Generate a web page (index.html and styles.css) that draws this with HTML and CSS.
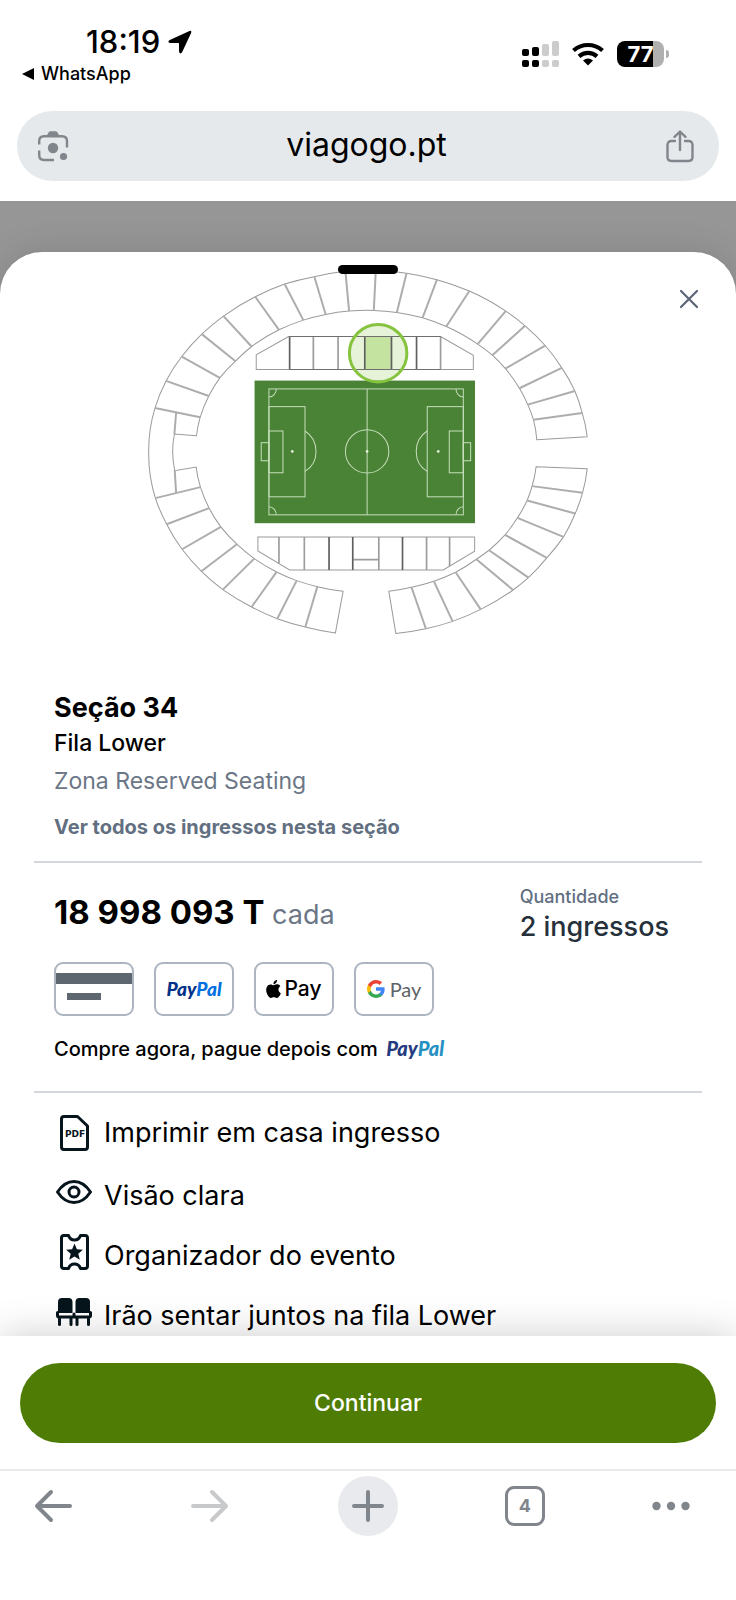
FILE: index.html
```html
<!DOCTYPE html>
<html lang="pt">
<head>
<meta charset="utf-8">
<meta name="viewport" content="width=device-width, initial-scale=1">
<title>viagogo.pt</title>
<link rel="stylesheet" href="styles.css">
</head>
<body>
<div class="screen">
  <header class="status">
    <div class="status-left">
      <div class="clock">18:19
        <svg width="24" height="24" viewBox="0 0 24 24" aria-hidden="true"><path d="M21.500 1 1.800 10Q0 11 .5 12.200 1 13 2.500 13H10.500Q11 13 11 13.500V21Q11 23 12.200 23.400 13.500 23.500 14.200 22L23.200 2.800Q24 .300 21.500 1Z"/></svg>
      </div>
      <a class="return" href="#"><svg width="12" height="12" viewBox="0 0 12 12" aria-hidden="true"><path d="M0 6 12 0V12Z"/></svg>WhatsApp</a>
    </div>
    <div class="status-right">
      <svg width="37" height="26" viewBox="0 0 37 26" role="img" aria-label="Sinal">
        <rect x="0" y="8" width="7" height="7" rx="2"/><rect x="10" y="6" width="7" height="9" rx="2"/>
        <rect x="0" y="19" width="7" height="7" rx="2"/><rect x="10" y="19" width="7" height="7" rx="2"/>
        <g fill="#ccc"><rect x="20" y="3" width="7" height="12" rx="2"/><rect x="30" y="0" width="7" height="15" rx="2"/><rect x="20" y="19" width="7" height="7" rx="2"/><rect x="30" y="19" width="7" height="7" rx="2"/></g>
      </svg>
      <svg width="32" height="24" viewBox="0 0 32 24" role="img" aria-label="Wi-Fi"><g fill="none" stroke="#000" stroke-width="4.200"><path d="M1.500 8.500Q8 3 16 3T30.500 8.500"/><path d="M7 14.300Q11 10.900 16 10.900T25 14.300"/></g><path d="M11 18.500Q16 14.500 21 18.500L16 23.500Z"/></svg>
      <div class="battery"><span>77</span></div>
    </div>
  </header>

  <div class="address">
    <button class="plain" aria-label="Pesquisar com a câmara">
      <svg width="32" height="32" viewBox="0 0 32 32" fill="none" stroke="#80868b" stroke-width="2.400"><path d="M2.200 14.500V11Q2.200 6.200 7 6.200H25Q30 6.200 30 11V17.500M2.200 20.500V25Q2.200 30 7 30H17"/><path fill="#80868b" stroke="none" d="M9.500 6 11.500 2.500Q12.200 1.200 13.500 1.200H18.500Q19.800 1.200 20.500 2.500L22.500 6Z"/><circle cx="16" cy="18" r="5.200" fill="#80868b" stroke="none"/><circle cx="26.500" cy="26.500" r="3.600" fill="#80868b" stroke="none"/></svg>
    </button>
    <input class="url" type="text" value="viagogo.pt" aria-label="Endereço">
    <button class="plain" aria-label="Partilhar">
      <svg width="32" height="34" viewBox="0 0 32 34" fill="none" stroke="#80868b" stroke-width="2.400" stroke-linecap="round" stroke-linejoin="round"><path d="M11 12H7.500Q3.500 12 3.500 16V28Q3.500 32 7.500 32H24.500Q28.500 32 28.500 28V16Q28.500 12 24.500 12H21M16 21V3M10.500 7.800 16 2.500 21.500 7.800"/></svg>
    </button>
  </div>

  <main class="backdrop">
    <section class="sheet">
      <span class="handle"></span>
      <button class="plain close" aria-label="Fechar"><svg width="20" height="20" viewBox="0 0 20 20" stroke="#5c6577" stroke-width="2.200" stroke-linecap="round"><path d="M2 2 18 18M18 2 2 18"/></svg></button>

      <svg class="map" viewBox="-4 0 1380 1170" role="img" aria-label="Mapa do estádio">
        <g fill="none" stroke="#9a9a9a" stroke-width="3">
          <path d="M171 541A524 416 0 0 1 182 486 524 416 0 0 1 208 422 524 416 0 0 1 241 368 524 416 0 0 1 288 318 524 416 0 0 1 336 274 524 416 0 0 1 418 224 524 416 0 0 1 491 195 524 416 0 0 1 558 178 524 416 0 0 1 628 168 524 416 0 0 1 702 166 524 416 0 0 1 771 172 524 416 0 0 1 848 188 524 416 0 0 1 919 214 524 416 0 0 1 1013 267 524 416 0 0 1 1057 300 524 416 0 0 1 1096 340 524 416 0 0 1 1138 399 524 416 0 0 1 1163 448 524 416 0 0 1 1180 493 524 416 0 0 1 1190 553L1341 544A661 536 0 0 0 1326 473 661 536 0 0 0 1304 407 661 536 0 0 0 1265 338 661 536 0 0 0 1215 271 661 536 0 0 0 1155 212 661 536 0 0 0 1097 168 661 536 0 0 0 988 108 661 536 0 0 0 891 74 661 536 0 0 0 800 55 661 536 0 0 0 708 46 661 536 0 0 0 617 49 661 536 0 0 0 524 65 661 536 0 0 0 435 87 661 536 0 0 0 347 125 661 536 0 0 0 252 183 661 536 0 0 0 187 237 661 536 0 0 0 127 304 661 536 0 0 0 80 377 661 536 0 0 0 47 458 661 536 0 0 0 28 595 661 536 0 0 0 48 728 661 536 0 0 0 82 806 661 536 0 0 0 128 881 661 536 0 0 0 186 947 661 536 0 0 0 250 1002 661 536 0 0 0 336 1054 661 536 0 0 0 413 1089 661 536 0 0 0 497 1114 661 536 0 0 0 587 1132L610 1007A524 416 0 0 1 533 993 524 416 0 0 1 471 975 524 416 0 0 1 411 949 524 416 0 0 1 344 909 524 416 0 0 1 292 866 524 416 0 0 1 244 814 524 416 0 0 1 209 758 524 416 0 0 1 183 695 524 416 0 0 1 170 635L106 646Q94 591 105 536Z"/>
          <path d="M1188 634 1341 640A661 536 0 0 1 1327 712 661 536 0 0 1 1305 774 661 536 0 0 1 1270 844 661 536 0 0 1 1220 907 661 536 0 0 1 1165 966 661 536 0 0 1 1119 1003 661 536 0 0 1 1022 1061 661 536 0 0 1 938 1097 661 536 0 0 1 858 1119 661 536 0 0 1 768 1133L747 1007A524 416 0 0 0 815 995 524 416 0 0 0 882 977 524 416 0 0 0 947 950 524 416 0 0 0 1009 911 524 416 0 0 0 1047 884 524 416 0 0 0 1095 838 524 416 0 0 0 1132 787 524 416 0 0 0 1161 735 524 416 0 0 0 1176 692 524 416 0 0 0 1188 634Z"/>
          <path d="M350 343V299L447 244H902L1000 300V343ZM355 844H1004V887L910 943H450L355 886Z"/>
        </g>
        <path fill="none" stroke="#adadad" stroke-width="6" d="M617 49 628 168M524 65 558 178M435 87 491 195M347 125 418 224M252 183 336 274M187 237 288 318M127 304 241 368M80 377 208 422M47 458 182 486M110 473 105 536M708 46 702 166M800 55 771 172M891 74 848 188M988 108 919 214M1097 168 1013 267M1155 212 1057 300M1215 271 1096 340M1265 338 1138 399M1304 407 1163 448M1326 473 1180 493M48 728 183 695M106 646 110 712M82 806 209 758M128 881 244 814M186 947 292 866M250 1002 344 909M336 1054 411 949M413 1089 471 975M497 1114 533 993M1176 692 1327 712M1161 735 1305 774M1132 787 1270 844M1095 838 1220 907M1047 884 1165 966M1009 911 1119 1003M947 950 1022 1061M882 977 938 1097M815 995 858 1119"/>
        <path fill="none" stroke="#9c9c9c" stroke-width="5" d="M521 244V343M595 244V343M902 244V343M418 844V924M494 844V943M717 844V943M860 844V943M929 844V931M641 912H717"/>
        <rect x="345" y="376" width="660" height="427" fill="#4b8336"/>
        <g fill="none" stroke="#c5dfbb" stroke-width="3">
          <rect x="388" y="401" width="582" height="377"/><path d="M682 401V778"/><circle cx="682" cy="588" r="65"/>
          <rect x="388" y="454" width="108" height="270"/><rect x="388" y="527" width="42" height="125"/><rect x="365" y="562" width="23" height="54"/>
          <rect x="862" y="454" width="108" height="270"/><rect x="928" y="527" width="42" height="125"/><rect x="970" y="562" width="22" height="54"/>
          <path d="M496 527Q529 548 529 588T496 648M862 527Q829 548 829 588T862 648M410 401A22 24 0 0 1 388 425M948 401A22 24 0 0 0 970 425M388 754A22 24 0 0 1 410 778M970 754A22 24 0 0 0 948 778"/>
        </g>
        <g fill="#e4f2de"><circle cx="458" cy="588" r="4"/><circle cx="682" cy="588" r="4"/><circle cx="895" cy="588" r="4"/></g>
        <circle cx="715" cy="294" r="86" fill="#86c440" fill-opacity=".2"/>
        <rect x="676" y="244" width="79" height="99" fill="#c5e3a0"/>
        <path fill="none" stroke="#5f5f5f" stroke-width="5" d="M450 244V343M675 244V343M755 244V343M830 244V343M568 844V943M639 844V943M788 844V943"/>
        <path fill="none" stroke="#6f6f6f" stroke-width="3" d="M450 244H902M450 343H902"/>
        <circle cx="715" cy="294" r="86" fill="none" stroke="#86c33f" stroke-width="9"/>
      </svg>

      <div class="section-info">
        <h1>Seção 34</h1>
        <p class="row-name">Fila Lower</p>
        <p class="zone">Zona Reserved Seating</p>
        <a class="see-all" href="#">Ver todos os ingressos nesta seção</a>
      </div>

      <div class="purchase">
        <div class="pricing">
          <p class="price"><strong>18 998 093 T</strong> <span>cada</span></p>
          <dl class="quantity"><dt>Quantidade</dt><dd>2 ingressos</dd></dl>
        </div>
        <ul class="methods">
          <li class="method card" aria-label="Cartão"></li>
          <li class="method"><span class="paypal"><span>Pay</span><span>Pal</span></span></li>
          <li class="method"><span class="apple"><svg width="15" height="18" viewBox="2 0 20 24" aria-hidden="true"><path d="M12.152 6.896c-.948 0-2.415-1.078-3.960-1.040-2.040.027-3.910 1.183-4.961 3.014-2.117 3.675-.546 9.103 1.519 12.090 1.013 1.454 2.208 3.090 3.792 3.039 1.520-.065 2.090-.987 3.935-.987 1.831 0 2.350.987 3.960.948 1.637-.026 2.676-1.480 3.676-2.948 1.156-1.688 1.636-3.325 1.662-3.415-.039-.013-3.182-1.221-3.220-4.857-.026-3.040 2.480-4.494 2.597-4.559-1.429-2.090-3.623-2.324-4.390-2.376-2-.156-3.675 1.090-4.610 1.090zM15.530 3.830c.843-1.012 1.400-2.427 1.245-3.830-1.207.052-2.662.805-3.532 1.818-.780.896-1.454 2.338-1.273 3.714 1.338.104 2.715-.688 3.559-1.701"/></svg>Pay</span></li>
          <li class="method"><span class="google"><svg width="18" height="18" viewBox="1 1 22 22" aria-hidden="true"><path fill="#4285f4" d="M22.560 12.250c0-.780-.070-1.530-.200-2.250H12v4.260h5.920c-.260 1.370-1.040 2.530-2.210 3.310v2.770h3.570c2.080-1.920 3.280-4.740 3.280-8.090z"/><path fill="#34a853" d="M12 23c2.970 0 5.460-.980 7.280-2.660l-3.570-2.770c-.980.660-2.230 1.060-3.710 1.060-2.860 0-5.290-1.930-6.160-4.530H2.180v2.840C3.990 20.530 7.700 23 12 23z"/><path fill="#fbbc05" d="M5.840 14.090c-.220-.660-.350-1.360-.350-2.090s.130-1.430.350-2.090V7.070H2.180C1.430 8.550 1 10.220 1 12s.430 3.450 1.180 4.930l2.850-2.220.810-.620z"/><path fill="#ea4335" d="M12 5.380c1.620 0 3.060.560 4.210 1.640l3.150-3.150C17.450 2.090 14.970 1 12 1 7.700 1 3.990 3.470 2.180 7.070l3.660 2.840c.870-2.600 3.300-4.530 6.160-4.530z"/></svg>Pay</span></li>
        </ul>
        <p class="later">Compre agora, pague depois com <span class="paypal soft"><span>Pay</span><span>Pal</span></span></p>
      </div>

      <ul class="features">
        <li><svg width="40" height="40" viewBox="0 0 40 40" aria-hidden="true"><path fill="none" stroke="#06141c" stroke-width="3" stroke-linejoin="round" d="M10 3.500H23.500L33.500 13V34Q33.500 36.500 31 36.500H10Q7.500 36.500 7.500 34V6Q7.500 3.500 10 3.500Z"/><text class="pdf" x="21" y="24" text-anchor="middle">PDF</text></svg>Imprimir em casa ingresso</li>
        <li><svg width="40" height="40" viewBox="0 0 40 40" fill="none" stroke="#06141c" stroke-width="3" stroke-linejoin="round" aria-hidden="true"><path d="M3.500 20Q10.500 9.500 20 9.500T36.500 20Q29.500 30.500 20 30.500T3.500 20Z"/><circle cx="20" cy="20" r="5"/></svg>Visão clara</li>
        <li><svg width="40" height="40" viewBox="0 0 40 40" aria-hidden="true"><path fill="none" stroke="#06141c" stroke-width="3" stroke-linejoin="round" d="M10 3.500H14.500Q16 8 20.500 8T26.500 3.500H31Q33.500 3.500 33.500 6V34Q33.500 36.500 31 36.500H26.500Q25 32 20.500 32T14.500 36.500H10Q7.500 36.500 7.500 34V6Q7.500 3.500 10 3.500Z"/><path fill="#06141c" d="M20.500 11.500 22.900 17.200 28.900 17.700 24.300 21.700 25.800 27.700 20.500 24.500 15.200 27.700 16.700 21.700 12.100 17.700 18.100 17.200Z"/></svg>Organizador do evento</li>
        <li><svg width="40" height="40" viewBox="0 0 40 40" fill="#06141c" aria-hidden="true"><path d="M4 21V10Q4 6 8 6H14.500Q18.500 6 18.500 10V21ZM21.500 21V10Q21.500 6 25.500 6H32Q36 6 36 10V21Z"/><path fill="none" stroke="#06141c" stroke-width="3" stroke-linecap="round" d="M3.500 20.500V23.500Q3.500 25 5 25H35Q36.500 25 36.500 23.500V20.500M20 22V25M5.500 26V32.500M17 26V32.500M23 26V32.500M34.500 26V32.500"/></svg>Irão sentar juntos na fila Lower</li>
      </ul>
    </section>
  </main>

  <div class="action"><button class="continue">Continuar</button></div>

  <nav class="toolbar" aria-label="Navegador">
    <button class="plain" aria-label="Voltar"><svg width="38" height="34" viewBox="0 0 38 34" fill="none" stroke="#80868b" stroke-width="4" stroke-linecap="round" stroke-linejoin="round"><path d="M17 3 3 17 17 31M3 17H36"/></svg></button>
    <button class="plain" aria-label="Avançar" disabled><svg width="38" height="34" viewBox="0 0 38 34" fill="none" stroke="#c8c9ca" stroke-width="4" stroke-linecap="round" stroke-linejoin="round"><path d="M21 3 35 17 21 31M35 17H2"/></svg></button>
    <button class="plain new-tab" aria-label="Novo separador"><svg width="32" height="32" viewBox="0 0 32 32" stroke="#80868b" stroke-width="4" stroke-linecap="round"><path d="M16 2V30M2 16H30"/></svg></button>
    <button class="plain" aria-label="4 separadores"><span class="tabs">4</span></button>
    <button class="plain more" aria-label="Mais"><svg width="38" height="10" viewBox="0 0 38 10" fill="#80868b"><circle cx="4.500" cy="5" r="4.200"/><circle cx="19" cy="5" r="4.200"/><circle cx="33.500" cy="5" r="4.200"/></svg></button>
  </nav>
</div>
</body>
</html>
```
FILE: styles.css
```css
* { box-sizing: border-box; }

body {
  margin: 0;
  background: #fff;
  color: #000;
  font-family: Inter, "Liberation Sans", sans-serif;
}

h1, p, ul, dl, dd { margin: 0; padding: 0; }
ul { list-style: none; }
svg { display: block; flex: none; }

.screen {
  display: flex;
  flex-direction: column;
  min-height: 100vh;
}

.plain {
  display: flex;
  align-items: center;
  justify-content: center;
  padding: 0;
  border: 0;
  background: none;
  font-family: inherit;
}

/* Status bar */
.status {
  display: flex;
  justify-content: space-between;
  align-items: flex-start;
  padding: 24px 72px 23px 22px;
}
.clock {
  display: flex;
  align-items: center;
  gap: 8px;
  padding-left: 64px;
  font-size: 31px;
  font-weight: 500;
  line-height: 36px;
}
.return {
  display: flex;
  align-items: center;
  gap: 7px;
  color: #000;
  font-size: 18px;
  font-weight: 500;
  line-height: 28px;
  text-decoration: none;
}
.status-right {
  display: flex;
  align-items: center;
  gap: 13px;
  padding-top: 17px;
}
.battery {
  position: relative;
  width: 47px;
  border-radius: 8px;
  background: linear-gradient(90deg, #000 77%, #b0b0b0 77%);
  color: #fff;
  font-size: 22px;
  font-weight: 700;
  line-height: 26px;
  text-align: center;
}
.battery::after {
  content: "";
  position: absolute;
  top: 9px;
  right: -5px;
  width: 3px;
  height: 8px;
  border-radius: 0 3px 3px 0;
  background: #b0b0b0;
}

/* Address bar */
.address {
  display: flex;
  align-items: center;
  gap: 12px;
  margin: 0 17px 20px;
  padding: 0 23px 0 20px;
  height: 70px;
  border-radius: 35px;
  background: #e5e9ec;
}
.url {
  flex: 1;
  min-width: 0;
  padding: 0 0 3px;
  border: 0;
  background: none;
  color: #000;
  font: 400 32px/40px Inter, "Liberation Sans", sans-serif;
  text-align: center;
}

/* Ticket sheet */
.backdrop {
  flex: 1;
  padding-top: 51px;
  background: #969696;
}
.sheet {
  position: relative;
  padding: 3px 34px 0;
  border-radius: 42px 42px 0 0;
  background: #fff;
  box-shadow: 0 0 36px rgba(0, 0, 0, .12);
}
.handle {
  position: absolute;
  top: 13px;
  left: calc(50% - 30px);
  width: 60px;
  height: 9px;
  border-radius: 5px;
  background: #000;
}
.close {
  position: absolute;
  top: 32px;
  right: 32px;
  width: 30px;
  height: 30px;
}
.map {
  width: 69%;
  margin: 0 auto;
}

.section-info {
  padding: 44px 20px 18px;
  border-bottom: 2px solid #d3d6da;
}
h1 {
  font-size: 27px;
  font-weight: 700;
  line-height: 36px;
}
.row-name {
  font-size: 23px;
  font-weight: 500;
  line-height: 34px;
}
.zone {
  color: #6b7686;
  font-size: 23px;
  line-height: 42px;
}
.see-all {
  display: block;
  padding-top: 9px;
  color: #626f81;
  font-size: 20px;
  font-weight: 700;
  line-height: 32px;
  text-decoration: none;
}

.purchase {
  padding: 22px 20px 26px;
  border-bottom: 2px solid #d3d6da;
}
.pricing {
  display: flex;
  justify-content: space-between;
  padding-right: 13px;
}
.price {
  padding-top: 6px;
  color: #6b7686;
  font-size: 27px;
  line-height: 42px;
}
.price strong {
  color: #000;
  font-size: 33px;
}
.quantity dt {
  color: #626f81;
  font-size: 18px;
  font-weight: 500;
  line-height: 24px;
}
.quantity dd {
  color: #26303a;
  font-size: 27px;
  font-weight: 500;
  line-height: 36px;
}
.methods {
  display: flex;
  gap: 20px;
  padding: 17px 0;
}
.method {
  display: flex;
  align-items: center;
  justify-content: center;
  width: 80px;
  height: 54px;
  border: 2px solid #adb6c0;
  border-radius: 9px;
}
.card {
  flex-direction: column;
  align-items: flex-start;
  justify-content: flex-start;
}
.card::before {
  content: "";
  width: 100%;
  height: 11px;
  margin-top: 9px;
  background: #5e6770;
}
.card::after {
  content: "";
  width: 34px;
  height: 7px;
  margin: 9px 0 0 11px;
  background: #5e6770;
}
.paypal {
  color: #003087;
  font: italic 900 19px/24px Lato, sans-serif;
}
.paypal span + span { color: #0070e0; }
.soft {
  padding-left: 3px;
  color: #253b80;
  font-size: 20px;
}
.soft span + span { color: #2790c3; }
.apple, .google {
  display: flex;
  align-items: center;
  gap: 3px;
  font-size: 21px;
  font-weight: 500;
  line-height: 26px;
}
.google {
  gap: 5px;
  color: #5f6368;
  font: 400 20px/26px Lato, sans-serif;
}
.later {
  font-size: 20px;
  font-weight: 500;
  line-height: 32px;
}

.features {
  margin-bottom: -12px;
  padding: 10px 20px 0;
  font-size: 27px;
  line-height: 60px;
}
.features li {
  display: flex;
  align-items: center;
  gap: 10px;
}
.features li:first-child { padding-bottom: 3px; }
.features li + li svg { margin-bottom: 8px; }
.pdf {
  fill: #06141c;
  font: 700 9px "DejaVu Sans", sans-serif;
}

/* Purchase action, over the end of the sheet */
.action {
  position: relative;
  padding: 27px 20px 26px;
  background: #fff;
  box-shadow: 0 0 38px rgba(0, 0, 0, .2);
}
.continue {
  width: 100%;
  height: 80px;
  border: 0;
  border-radius: 40px;
  background: #4e7c04;
  color: #fff;
  font: 500 23px/30px Inter, "Liberation Sans", sans-serif;
}

/* Browser toolbar */
.toolbar {
  position: relative;
  display: flex;
  align-items: center;
  justify-content: space-between;
  padding: 5px 24px 64px 23px;
  border-top: 2px solid #e9eaeb;
  background: #fff;
}
.toolbar .plain {
  width: 60px;
  height: 60px;
}
.toolbar .new-tab {
  border-radius: 50%;
  background: #e8eaed;
}
.toolbar .more { justify-content: flex-start; }
.tabs {
  width: 40px;
  height: 40px;
  border: 3px solid #80868b;
  border-radius: 9px;
  color: #80868b;
  font-size: 18px;
  font-weight: 700;
  line-height: 34px;
}
```
